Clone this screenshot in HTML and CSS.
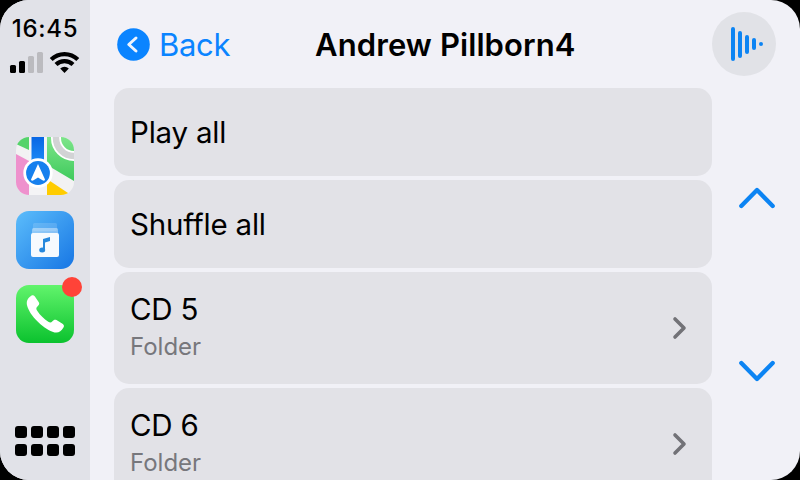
FILE: index.html
```html
<!DOCTYPE html>
<html lang="en">
<head>
<meta charset="utf-8">
<title>Andrew Pillborn4</title>
<link rel="stylesheet" href="styles.css">
</head>
<body>
<div class="screen">
  <aside class="sidebar">
    <div class="clock">16:45</div>
    <svg class="status" width="90" height="26" viewBox="0 50 90 26">
      <rect x="10" y="65" width="6" height="8" rx="1.5"/>
      <rect x="19" y="61" width="6" height="12" rx="1.5"/>
      <rect x="28" y="56" width="6" height="17" rx="1.5" fill="#bbbbbf"/>
      <rect x="37" y="52" width="6" height="21" rx="1.5" fill="#bbbbbf"/>
      <g fill="none" stroke="#000" stroke-width="4.2">
        <path d="M51.200 59.500a19 19 0 0 1 26.600 0"/>
        <path d="M56 64.600a12.200 12.200 0 0 1 17 0"/>
      </g>
      <path d="M60.200 68.400a6.300 6.300 0 0 1 8.600 0L64.500 73z"/>
    </svg>
    <nav class="apps">
      <svg class="app" viewBox="0 0 58 58">
        <defs>
          <linearGradient id="green" x2="0" y2="1"><stop stop-color="#7de58a"/><stop offset="1" stop-color="#3fca5c"/></linearGradient>
          <linearGradient id="road" x2="0" y2="1"><stop stop-color="#0866e4"/><stop offset="1" stop-color="#2091fa"/></linearGradient>
          <clipPath id="tile"><rect width="58" height="58" rx="13"/></clipPath>
        </defs>
        <g clip-path="url(#tile)">
          <rect width="58" height="58" fill="#f2f2f3"/>
          <path d="M0 0H13V13L0 7z" fill="#55d36b"/>
          <path d="M0 17L13 24V58H0z" fill="#ee91cd"/>
          <path d="M31 0H58V44L31 28z" fill="url(#green)"/>
          <circle cx="58" cy="1" r="18" fill="none" stroke="#fff" stroke-width="10"/>
          <circle cx="58" cy="1" r="18" fill="none" stroke="#d2d3d5" stroke-width="6.500"/>
          <path d="M31 42L55 58H31z" fill="#fc0"/>
          <path d="M13 0H31V58H13z" fill="#f4f4f6"/>
          <path d="M15.500 0H28V30H15.500z" fill="url(#road)"/>
          <circle cx="22" cy="36" r="14.700" fill="#fff"/>
          <circle cx="22" cy="36" r="11.900" fill="#1680ee"/>
          <path d="M22 27L29 42.500Q28.500 44.500 26.500 43.300L22 40.500L17.500 43.300Q15.500 44.500 15 42.500z" fill="#fff"/>
        </g>
      </svg>
      <svg class="app" viewBox="0 0 58 58">
        <defs><linearGradient id="blue" x2="1" y2="1"><stop stop-color="#5cbdfb"/><stop offset="1" stop-color="#1776e4"/></linearGradient></defs>
        <rect width="58" height="58" rx="13" fill="url(#blue)"/>
        <rect x="17" y="12" width="24" height="8" rx="1.500" fill="#fff" opacity=".15"/>
        <rect x="16" y="17" width="26" height="9" rx="1.500" fill="#fff" opacity=".4"/>
        <rect x="15" y="22" width="28" height="24" rx="2" fill="#f6fafe"/>
        <g fill="#2688dd"><path d="M27 28L34 26V30L29 31.400V39H27z"/><ellipse cx="26.200" cy="39" rx="3" ry="2.500"/></g>
      </svg>
      <div class="phone">
        <svg class="app" viewBox="0 0 58 58">
          <defs><linearGradient id="call" x2="0" y2="1"><stop stop-color="#62f46c"/><stop offset="1" stop-color="#0bc22e"/></linearGradient></defs>
          <rect width="58" height="58" rx="13" fill="url(#call)"/>
          <path d="M15.300 10.700C16.500 10 18 10.300 18.900 11.500L22.800 17.300C24 19 22.500 20.500 21 22C20 23 20.200 24.200 21.200 25.800C24 30.200 28 34 32.300 36.700C34 37.800 35.200 37.500 36.200 36.500C37.700 34.800 38.800 34.200 40.500 35L46.500 38.700C48.300 39.900 48.300 41.200 47.300 42.800C44.800 47.100 41.400 48.800 36.500 46.700C26.500 43 14 30.500 11.300 21.200C9.900 16.600 11.400 13.100 15.300 10.700Z" fill="#fff"/>
        </svg>
        <span class="badge"></span>
      </div>
    </nav>
    <div class="dots"><i></i><i></i><i></i><i></i><i></i><i></i><i></i><i></i></div>
  </aside>
  <main class="main">
    <header class="header">
      <div class="back">
        <svg width="33" height="33" viewBox="0 0 33 33"><circle cx="16.500" cy="16.500" r="16.300" fill="#0a84ff"/><path d="M19 10L11.800 16.500L19 23" fill="none" stroke="#f0f4fc" stroke-width="3" stroke-linecap="round" stroke-linejoin="round"/></svg>
        <span>Back</span>
      </div>
      <h1 class="title">Andrew Pillborn4</h1>
      <div class="playing">
        <svg width="64" height="64" viewBox="0 0 64 64" fill="none" stroke="#0c84f3" stroke-width="4" stroke-linecap="round"><path d="M21 17V47M28 21V44M35 25V40M42 28V36M49 32V32"/></svg>
      </div>
    </header>
    <div class="content">
      <div class="list">
        <div class="row">Play all</div>
        <div class="row">Shuffle all</div>
        <div class="row tall">
          <div class="entry"><div class="name">CD 5</div><div class="kind">Folder</div></div>
          <svg class="more" viewBox="0 0 16 24"><path d="M3 3L12 12L3 21"/></svg>
        </div>
        <div class="row tall">
          <div class="entry"><div class="name">CD 6</div><div class="kind">Folder</div></div>
          <svg class="more" viewBox="0 0 16 24"><path d="M3 3L12 12L3 21"/></svg>
        </div>
      </div>
      <div class="scroll">
        <svg width="36" height="22" viewBox="0 0 36 22"><path d="M2.300 19L18 3L33.700 19"/></svg>
        <svg width="36" height="22" viewBox="0 0 36 22"><path d="M2.300 3L18 19L33.700 3"/></svg>
      </div>
    </div>
  </main>
</div>
</body>
</html>
```
FILE: styles.css
```css
* { box-sizing: border-box; }
body { margin: 0; background: #000; color: #000; font-family: Inter, "Liberation Sans", sans-serif; overflow: hidden; }
svg { display: block; flex: none; }
.screen { display: flex; width: 800px; height: 480px; border-radius: 29px; overflow: hidden; background: #f1f1f7; }
.sidebar { width: 90px; height: 480px; background: #e1e2e8; display: flex; flex-direction: column; padding-top: 14px; flex: none; }
.clock { height: 30px; line-height: 30px; font-size: 24px; font-weight: 500; letter-spacing: 0.7px; text-align: center; white-space: nowrap; }
.status { margin-top: 6px; }
.apps { display: flex; flex-direction: column; gap: 16px; padding: 61px 16px 0; }
.app { width: 58px; height: 58px; }
.phone { position: relative; }
.badge { position: absolute; right: -8px; top: -8px; width: 20px; height: 20px; border-radius: 50%; background: #ff4338; }
.dots { margin: auto 15px 24px; display: grid; grid-template-columns: repeat(4, 12px); gap: 6px 4px; }
.dots i { height: 12px; border-radius: 3px; background: #000; }
.main { width: 710px; }
.header { height: 88px; display: flex; padding-left: 27px; }
.back { display: flex; align-items: center; gap: 9px; height: 89px; width: 198px; color: #0a84ff; font-size: 31px; letter-spacing: -0.3px; line-height: 42px; }
.title { margin: 0; width: 397px; height: 88px; line-height: 89px; font-size: 31px; font-weight: 600; letter-spacing: 0.1px; white-space: nowrap; }
.playing { margin-top: 12px; width: 64px; height: 64px; border-radius: 50%; background: #e1e2e7; }
.content { display: flex; height: 392px; padding-left: 24px; }
.list { flex: none; width: 598px; display: flex; flex-direction: column; gap: 4px; }
.row { flex: none; height: 88px; padding: 0 24px 0 16px; border-radius: 15px; background: #e2e2e7; display: flex; align-items: center; justify-content: space-between; font-size: 29.5px; letter-spacing: -0.2px; }
.tall { height: 112px; }
.entry { padding-bottom: 2px; }
.name { height: 39px; line-height: 41px; }
.kind { height: 37px; line-height: 37px; font-size: 24px; letter-spacing: 0; color: #77777c; }
.more { width: 16px; height: 24px; }
.more path { fill: none; stroke: #727277; stroke-width: 3.6; stroke-linecap: round; stroke-linejoin: round; }
.scroll { padding: 99px 27px 0; display: flex; flex-direction: column; gap: 151px; }
.scroll path { fill: none; stroke: #0c84f3; stroke-width: 4.3; stroke-linecap: round; stroke-linejoin: round; }
```
